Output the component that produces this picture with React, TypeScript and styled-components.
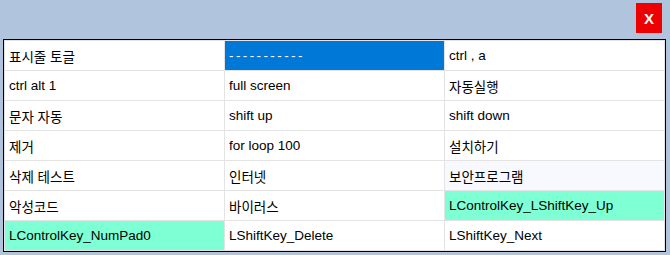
import React from "react"
import styled, { createGlobalStyle } from "styled-components"

const GlobalStyle = createGlobalStyle`
  html, body {
    margin: 0;
    padding: 0;
    background: #b0c4de;
  }
`

const Window = styled.div`
  width: 670px;
  height: 255px;
  box-sizing: border-box;
  display: flex;
  flex-direction: column;
  background: #b0c4de;
  padding: 3px 4px 3px 3px;
  font-family: "Liberation Sans", "Noto Sans CJK KR", sans-serif;
  font-size: 13.5px;
`

const TopBar = styled.div`
  height: 36px;
  display: flex;
  justify-content: flex-end;
  align-items: flex-start;
`

const CloseButton = styled.button`
  width: 26px;
  height: 30px;
  margin-right: 4px;
  border: none;
  padding: 0;
  background: #ee0000;
  color: #ffffff;
  font-family: "Liberation Sans", sans-serif;
  font-weight: bold;
  font-size: 15px;
  cursor: pointer;
`

const Grid = styled.div`
  flex: 1;
  display: grid;
  grid-template-columns: repeat(3, 1fr);
  grid-template-rows: repeat(7, 1fr);
  gap: 1px;
  padding: 1px;
  border: 1px solid #000000;
  background: #e3e3e3;
`

type Tone = "plain" | "selected" | "mark" | "soft"

const toneBg: Record<Tone, string> = {
  plain: "#ffffff",
  selected: "#0078d7",
  mark: "#7fffd4",
  soft: "#f8f8ff",
}

const Cell = styled.div<{ $tone: Tone; $spaced?: boolean }>`
  display: flex;
  align-items: center;
  padding: 0 4px;
  background: ${p => toneBg[p.$tone]};
  color: ${p => (p.$tone === "selected" ? "#ffffff" : "#000000")};
  letter-spacing: ${p => (p.$spaced ? "2.4px" : "0")};
  white-space: nowrap;
  overflow: hidden;
`

interface Item {
  label: string
  tone?: Tone
}

const items: Item[] = [
  { label: "표시줄 토글" },
  { label: "-----------", tone: "selected" },
  { label: "ctrl , a" },
  { label: "ctrl alt 1" },
  { label: "full screen" },
  { label: "자동실행" },
  { label: "문자 자동" },
  { label: "shift up" },
  { label: "shift down" },
  { label: "제거" },
  { label: "for loop 100" },
  { label: "설치하기" },
  { label: "삭제 테스트" },
  { label: "인터넷" },
  { label: "보안프로그램", tone: "soft" },
  { label: "악성코드" },
  { label: "바이러스" },
  { label: "LControlKey_LShiftKey_Up", tone: "mark" },
  { label: "LControlKey_NumPad0", tone: "mark" },
  { label: "LShiftKey_Delete" },
  { label: "LShiftKey_Next" },
]

const App = () => {
  return (
    <>
      <GlobalStyle />
      <Window>
        <TopBar>
          <CloseButton>X</CloseButton>
        </TopBar>
        <Grid>
          {items.map((item, i) => (
            <Cell key={i} $tone={item.tone ?? "plain"} $spaced={item.tone === "selected"}>
              {item.label}
            </Cell>
          ))}
        </Grid>
      </Window>
    </>
  )
}

export default App
